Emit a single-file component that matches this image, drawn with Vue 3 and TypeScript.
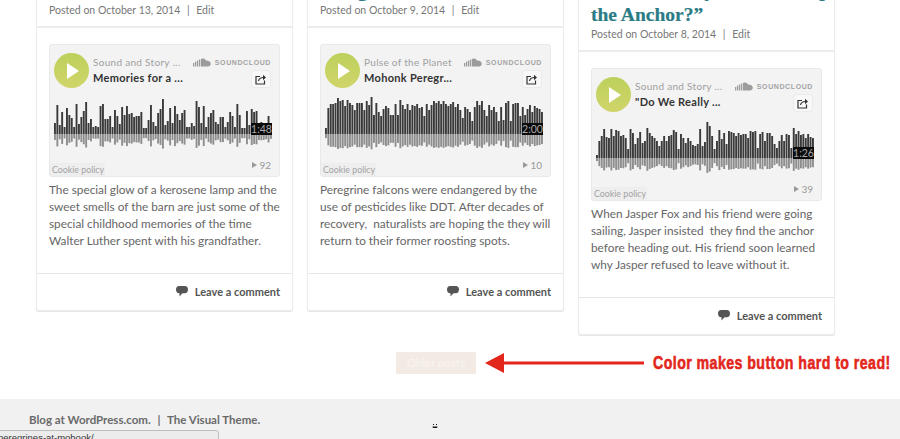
<template>
  <div class="page">
    <main class="posts">
      <article v-for="post in posts" :key="post.date" class="post">
        <header class="post-head">
          <h2 class="post-title">
            <span v-for="line in post.title" :key="line" class="title-line">{{ line }}</span>
          </h2>
          <p class="post-meta">Posted on {{ post.date }} <span class="sep">|</span> Edit</p>
        </header>

        <div class="post-body">
          <div class="player">
            <div class="player-top">
              <div class="play-btn">
                <svg viewBox="0 0 12 16" width="12" height="16"><path d="M0 0 L12 8 L0 16 Z" fill="#fff" /></svg>
              </div>
              <div class="track">
                <div class="track-by">{{ post.artist }}</div>
                <div class="track-name">{{ post.track }}</div>
              </div>
              <div class="brand-col">
                <div class="brand">
                  <svg viewBox="0 0 18 9" width="18" height="9">
                    <path
                      d="M0 5h1.300v3.500h-1.300zM2 3.500h1.300v5h-1.300zM4 2.500h1.300v6h-1.300zM6 1.500h1.300v7h-1.300zM8 1C9.500 0 12 .2 13 2.500C15 2.200 17.800 3.300 17.800 5.800C17.800 7.800 16.200 8.500 15 8.500H8Z"
                      fill="#9c9c9c"
                    />
                  </svg>
                  <span class="brand-name">SOUNDCLOUD</span>
                </div>
                <button class="share" type="button">
                  <svg viewBox="0 0 12 11" width="12" height="11" fill="none" stroke="#333" stroke-width="1.200">
                    <path d="M5 2.500H1V10H9.500V6.500" />
                    <path d="M3.500 7C4 4.500 6 3.500 8.500 3.500" />
                    <path d="M8 .8L11 3.500L8 6.200Z" fill="#333" stroke="none" />
                  </svg>
                </button>
              </div>
            </div>

            <div class="wave-wrap">
              <svg class="wave" viewBox="0 0 218 64" width="218" height="64">
                <g v-for="(h, i) in post.wave" :key="i">
                  <rect :x="i * 2.4" :y="47 - h" width="1.900" :height="h" fill="#3a3a3a" />
                  <rect :x="i * 2.4" y="47" width="1.900" :height="h * 0.36 + 2" fill="#8e8e8e" />
                </g>
              </svg>
              <span class="timer">{{ post.time }}</span>
            </div>

            <div class="player-foot">
              <span class="cookie">Cookie policy</span>
              <span class="plays"><i class="plays-icon"></i>{{ post.plays }}</span>
            </div>
          </div>

          <p class="excerpt">
            <span v-for="line in post.text" :key="line" class="text-line">{{ line }}</span>
          </p>
        </div>

        <footer class="post-foot">
          <svg viewBox="0 0 12 11" width="12" height="11">
            <path d="M3 0H9C10.800 0 12 1.200 12 3.500C12 5.800 10.800 7.200 9 7.200H6.500L3.500 10.500V7.200H3C1.200 7.200 0 5.800 0 3.500C0 1.200 1.200 0 3 0Z" fill="#555" />
          </svg>
          <span>Leave a comment</span>
        </footer>
      </article>
    </main>

    <div class="pager">
      <a class="older">Older posts</a>
      <svg class="arrow" viewBox="0 0 160 20" width="160" height="20">
        <path d="M0 10 L19 0 V8.500 H159 V11.500 H19 V20 Z" fill="#e2261b" />
      </svg>
      <span class="note">Color makes button hard to read!</span>
    </div>

    <footer class="site-foot">Blog at WordPress.com. <span class="foot-sep">|</span> The Visual Theme.</footer>

    <div class="status-url">peregrines-at-mohook/</div>
    <svg class="cursor" viewBox="0 0 6 6" width="6" height="6">
      <path d="M1 1h1v1h-1zM4 1h1v1h-1zM.5 3.500H5.500V4.200L4.500 5H1.500L.5 4.200Z" fill="#111" />
    </svg>
  </div>
</template>

<script setup lang="ts">
interface Post {
  title: string[]
  date: string
  artist: string
  track: string
  time: string
  plays: number
  wave: number[]
  text: string[]
}

const posts: Post[] = [
  {
    title: ['Memories for a Lifetime'],
    date: 'October 13, 2014',
    artist: 'Sound and Story ...',
    track: 'Memories for a ...',
    time: '1:48',
    plays: 92,
    wave: [
      11, 29, 9, 22, 7, 26, 19, 16, 7, 30, 10, 17, 23, 32, 11, 15, 7, 8, 7, 28, 30, 15, 15, 18, 7, 24, 18, 10, 27, 19,
      28, 20, 21, 17, 18, 18, 22, 6, 6, 14, 29, 12, 8, 21, 25, 35, 9, 13, 26, 11, 28, 20, 14, 21, 24, 7, 7, 11, 8, 33,
      27, 11, 28, 7, 17, 21, 24, 12, 10, 17, 17, 7, 12, 22, 18, 7, 30, 19, 6, 6, 23, 9, 25, 22, 23, 11, 12, 11, 9, 18, 8
    ],
    text: [
      'The special glow of a kerosene lamp and the',
      'sweet smells of the barn are just some of the',
      'special childhood memories of the time',
      'Walter Luther spent with his grandfather.'
    ]
  },
  {
    title: ['Peregrines at Mohonk'],
    date: 'October 9, 2014',
    artist: 'Pulse of the Planet',
    track: 'Mohonk Peregr...',
    time: '2:00',
    plays: 10,
    wave: [
      6, 26, 30, 30, 31, 36, 33, 34, 28, 34, 31, 29, 24, 31, 31, 31, 24, 33, 29, 37, 19, 31, 22, 18, 25, 28, 26, 19, 19,
      30, 19, 34, 29, 25, 30, 24, 29, 28, 30, 26, 27, 18, 30, 24, 29, 33, 31, 33, 30, 33, 30, 28, 30, 32, 27, 30, 24, 16,
      27, 25, 22, 13, 27, 33, 29, 33, 24, 18, 29, 24, 27, 22, 13, 27, 14, 31, 33, 13, 30, 31, 31, 18, 27, 19, 25, 29,
      22, 28, 26, 25, 22
    ],
    text: [
      'Peregrine falcons were endangered by the',
      'use of pesticides like DDT. After decades of',
      'recovery,  naturalists are hoping the they will',
      'return to their former roosting spots.'
    ]
  },
  {
    title: ['“Do We Really Need to Drop', 'the Anchor?”'],
    date: 'October 8, 2014',
    artist: 'Sound and Story ...',
    track: '"Do We Really ...',
    time: '1:26',
    plays: 39,
    wave: [
      3, 17, 22, 29, 21, 20, 29, 22, 28, 27, 22, 23, 20, 9, 29, 25, 14, 20, 26, 15, 17, 30, 25, 22, 20, 17, 12, 17, 22,
      17, 22, 23, 28, 26, 9, 24, 20, 15, 20, 17, 13, 12, 14, 29, 12, 16, 36, 32, 22, 9, 17, 28, 19, 25, 14, 27, 26, 25,
      22, 25, 23, 24, 24, 20, 27, 26, 27, 10, 24, 26, 17, 25, 25, 22, 14, 10, 17, 23, 17, 24, 23, 10, 30, 24, 27, 23, 24,
      20, 24, 21, 20
    ],
    text: [
      'When Jasper Fox and his friend were going',
      'sailing, Jasper insisted  they find the anchor',
      'before heading out. His friend soon learned',
      'why Jasper refused to leave without it.'
    ]
  }
]
</script>

<style>
html,
body {
  margin: 0;
  background: #fff;
}
</style>

<style scoped>
.page {
  position: relative;
  height: 439px;
  overflow: hidden;
  font-family: Lato, "Open Sans", sans-serif;
  color: #666;
}

.posts {
  display: grid;
  grid-template-columns: repeat(3, 257px);
  gap: 14px;
  align-items: start;
  margin-top: -45px;
  padding-left: 36px;
}

.post {
  background: #fff;
  border: 1px solid #ececec;
  border-radius: 3px;
  box-shadow: 0 1px 1px #e4e4e4;
  box-sizing: border-box;
}

.post-head {
  padding: 23px 12px 9px;
  border-bottom: 2px solid #ececec;
}

.post-title {
  margin: 0;
  font-family: "Liberation Serif", serif;
  font-size: 19.500px;
  line-height: 24px;
  font-weight: 700;
  color: #2a7b85;
  -webkit-text-stroke: 0.2px #2a7b85;
}

.title-line,
.text-line {
  display: block;
  white-space: pre;
}

.post-meta {
  margin: 0;
  font-size: 10.500px;
  line-height: 14px;
  color: #777;
  white-space: pre;
}

.sep {
  margin: 0 4px;
}

.post-body {
  padding: 16px 12px 0;
}

.player {
  box-sizing: border-box;
  height: 133px;
  display: flex;
  flex-direction: column;
  background: #f3f3f3;
  border: 1px solid #e9e9e9;
  border-radius: 3px;
}

.player-top {
  display: flex;
  padding: 8px 8px 0 4px;
  height: 44px;
  box-sizing: border-box;
}

.play-btn {
  flex: none;
  width: 35px;
  height: 35px;
  border-radius: 50%;
  background: linear-gradient(#bdd05c, #d0d56a);
  display: flex;
  align-items: center;
  justify-content: center;
  padding-left: 2px;
  box-sizing: border-box;
}

.track {
  margin-left: 4px;
  flex: 1;
  min-width: 0;
  padding-top: 2px;
  white-space: nowrap;
}

.track-by {
  font-size: 10px;
  line-height: 15px;
  color: #a0a0a0;
  letter-spacing: 0.300px;
}

.track-name {
  font-size: 11px;
  line-height: 15px;
  font-weight: 700;
  color: #333;
  letter-spacing: 0.300px;
}

.brand-col {
  display: flex;
  flex-direction: column;
  align-items: flex-end;
  gap: 3px;
  padding-top: 4px;
}

.brand {
  display: flex;
  align-items: center;
  gap: 4px;
  height: 10px;
}

.brand-name {
  font-family: "Liberation Sans", sans-serif;
  font-size: 7px;
  font-weight: 700;
  letter-spacing: 0.600px;
  color: #a3a3a3;
}

.share {
  width: 20px;
  height: 18px;
  padding: 0;
  display: flex;
  align-items: center;
  justify-content: center;
  background: #f8f8f8;
  border: 1px solid #ebebeb;
  border-radius: 3px;
}

.wave-wrap {
  position: relative;
  padding-left: 4px;
  height: 64px;
  margin-top: -2px;
}

.wave {
  display: block;
}

.timer {
  position: absolute;
  left: 201px;
  top: 36px;
  width: 21px;
  height: 12px;
  background: #0b0b0b;
  color: #a8a8a8;
  font-size: 10.500px;
  line-height: 12px;
  text-align: center;
}

.player-foot {
  flex: 1;
  display: flex;
  justify-content: space-between;
  align-items: flex-end;
}

.cookie {
  background: #eee;
  color: #a3a3a3;
  font-size: 8.800px;
  line-height: 13px;
  padding: 0 1px 0 2px;
}

.plays {
  display: flex;
  align-items: center;
  gap: 2px;
  margin: 0 8px 5px 0;
  font-size: 10px;
  line-height: 12px;
  color: #999;
}

.plays-icon {
  width: 0;
  height: 0;
  border-left: 5px solid #999;
  border-top: 3.500px solid transparent;
  border-bottom: 3.500px solid transparent;
}

.excerpt {
  margin: 4px 0 0;
  font-size: 11.800px;
  line-height: 17px;
  color: #666;
  padding-bottom: 24px;
}

.post-foot {
  display: flex;
  justify-content: flex-end;
  align-items: center;
  gap: 7px;
  height: 37px;
  box-sizing: border-box;
  padding: 0 12px 1px 0;
  border-top: 1px solid #e6e6e6;
  font-size: 11px;
  font-weight: 700;
  color: #555;
}

.pager {
  display: flex;
  align-items: center;
  height: 22px;
  margin-top: 17px;
  padding-left: 396px;
}

.older {
  flex: none;
  width: 80px;
  height: 22px;
  line-height: 22px;
  text-align: center;
  background: #f3ebe3;
  color: #f8f4f0;
  font-size: 11.500px;
}

.arrow {
  flex: none;
  margin-left: 9px;
}

.note {
  flex: none;
  width: 238px;
  margin-left: 8px;
  font-family: "Liberation Sans", sans-serif;
  font-size: 19px;
  font-weight: 700;
  letter-spacing: 0.600px;
  color: #e2261b;
  white-space: nowrap;
  transform: scaleX(0.745);
  transform-origin: left center;
  -webkit-text-stroke: 0.6px #e2261b;
}

.site-foot {
  margin-top: 25px;
  height: 40px;
  box-sizing: border-box;
  padding: 14px 0 0 29px;
  background: #f1f1f1;
  font-size: 11.500px;
  line-height: 14px;
  font-weight: 700;
  color: #6a6a6a;
  white-space: pre;
}

.foot-sep {
  margin: 0 4px;
}

.status-url {
  position: absolute;
  left: -1px;
  bottom: -4px;
  width: 218px;
  height: 11px;
  background: #ececec;
  border: 1px solid #bdbdbd;
  border-radius: 0 3px 0 0;
  font-family: "Liberation Sans", sans-serif;
  font-size: 9.500px;
  line-height: 13px;
  text-indent: -2px;
  color: #333;
}

.cursor {
  position: absolute;
  left: 432px;
  top: 423px;
}
</style>
